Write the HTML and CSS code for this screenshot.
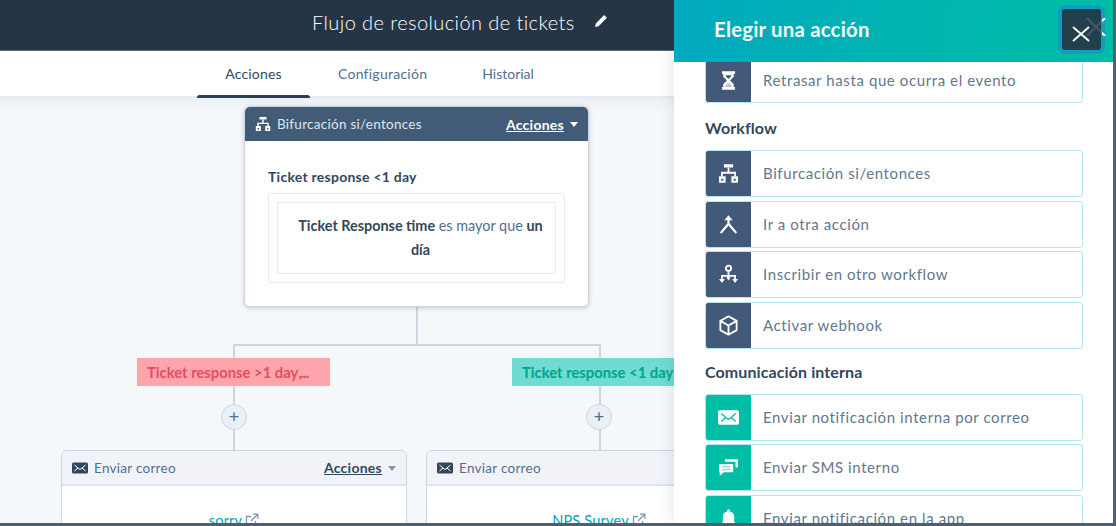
FILE: index.html
```html
<!DOCTYPE html>
<html lang="es">
<head>
<meta charset="utf-8">
<title>Flujo de resolución de tickets</title>
<link rel="stylesheet" href="styles.css">
</head>
<body>
<div class="app">
  <header class="topbar">
    <h1 class="flow-title">Flujo de resolución de tickets</h1>
    <svg class="pencil" viewBox="0 0 14 14"><path d="M1 13l.8-3.600L9.400 1.800a1.200 1.200 0 0 1 1.700 0l1.100 1.100a1.200 1.200 0 0 1 0 1.700L4.600 12.200z" fill="#fff"/></svg>
  </header>
  <nav class="tabs">
    <a class="tab tab-active">Acciones</a>
    <a class="tab tab-config">Configuración</a>
    <a class="tab tab-history">Historial</a>
  </nav>

  <main class="canvas">
    <div class="line line-root"></div>
    <div class="line line-split"></div>
    <div class="line line-left"></div>
    <div class="line line-right"></div>

    <section class="node node-branch">
      <div class="node-head head-dark">
        <svg class="head-icon" viewBox="0 0 16 16"><use href="#i-branch"/></svg>
        <span class="head-label">Bifurcación si/entonces</span>
        <a class="head-action">Acciones</a><i class="caret caret-white"></i>
      </div>
      <div class="branch-body">
        <h3 class="branch-name">Ticket response &lt;1 day</h3>
        <div class="rule-outer">
          <p class="rule-inner"><b>Ticket Response time</b> es mayor que <b>un día</b></p>
        </div>
      </div>
    </section>

    <span class="tag tag-red">Ticket response &gt;1 day<span class="dots">,...</span></span>
    <span class="tag tag-green">Ticket response &lt;1 day</span>
    <span class="add add-left">+</span>
    <span class="add add-right">+</span>

    <section class="node node-mail node-sorry">
      <div class="node-head head-light">
        <svg class="head-icon mail-small" viewBox="0 0 16 12"><use href="#i-mail"/></svg>
        <span class="head-label">Enviar correo</span>
        <a class="head-action">Acciones</a><i class="caret caret-blue"></i>
      </div>
      <div class="mail-body"><a class="mail-link">sorry</a><svg class="ext" viewBox="0 0 14 14"><use href="#i-ext"/></svg></div>
    </section>

    <section class="node node-mail node-nps">
      <div class="node-head head-light">
        <svg class="head-icon mail-small" viewBox="0 0 16 12"><use href="#i-mail"/></svg>
        <span class="head-label">Enviar correo</span>
      </div>
      <div class="mail-body"><a class="mail-link">NPS Survey</a><svg class="ext" viewBox="0 0 14 14"><use href="#i-ext"/></svg></div>
    </section>
  </main>

  <aside class="panel">
    <div class="panel-head">
      <h2 class="panel-title">Elegir una acción</h2>
      <button class="close" aria-label="Cerrar">
        <svg viewBox="0 0 39 41" width="39" height="41">
          <path d="M25 9l18 18M43 9L25 27" stroke="#42596a" stroke-width="2" fill="none"/>
          <path d="M11 18l16 14M27 18L11 32" stroke="#fff" stroke-width="1.800" fill="none"/>
        </svg>
      </button>
      <svg class="under-x" viewBox="0 0 5 18"><path d="M-15 0L3 18M3 0L-15 18" stroke="#fff" stroke-width="2" fill="none"/></svg>
    </div>
    <div class="panel-body">
      <div class="action action-first">
        <span class="action-icon navy"><svg viewBox="0 0 16 16"><path d="M3 1h10v2h-1v2.200L9.200 8 12 10.800V13h1v2H3v-2h1v-2.200L6.800 8 4 5.200V3H3z" fill="#fff"/><path d="M5.800 4h4.400v.6L8 6.800 5.800 4.600z" fill="#42597a"/><path d="M8 9.500 5.800 11.700V13h4.400v-1.300z" fill="#42597a" opacity=".35"/></svg></span>
        <span class="action-label">Retrasar hasta que ocurra el evento</span>
      </div>
      <h4 class="group">Workflow</h4>
      <div class="action">
        <span class="action-icon navy"><svg viewBox="0 0 16 16"><use href="#i-branch"/></svg></span>
        <span class="action-label">Bifurcación si/entonces</span>
      </div>
      <div class="action">
        <span class="action-icon navy"><svg viewBox="0 0 16 16"><path d="M4.800 4.800 8 1l3.200 3.800z" fill="#fff"/><path d="M8 4v3.500L2.500 14M8 7.500 13.500 14" fill="none" stroke="#fff" stroke-width="1.700" stroke-linecap="round"/></svg></span>
        <span class="action-label">Ir a otra acción</span>
      </div>
      <div class="action">
        <span class="action-icon navy"><svg viewBox="0 0 16 16"><circle cx="8" cy="3.200" r="2" fill="none" stroke="#fff" stroke-width="1.400"/><path d="M8 5.500v5M3 12.500V9h10v3.500" fill="none" stroke="#fff" stroke-width="1.400"/><path d="M.8 11.500h4.400L3 14.500zM10.800 11.500h4.400L13 14.500zM6.300 10h3.400L8 12.500z" fill="#fff"/></svg></span>
        <span class="action-label">Inscribir en otro workflow</span>
      </div>
      <div class="action">
        <span class="action-icon navy"><svg viewBox="0 0 16 16"><path d="M8 1 14.200 4.500v7L8 15l-6.200-3.500v-7zM1.800 4.500 8 8l6.200-3.500M8 8v7" fill="none" stroke="#fff" stroke-width="1.400" stroke-linejoin="round"/></svg></span>
        <span class="action-label">Activar webhook</span>
      </div>
      <h4 class="group group-comms">Comunicación interna</h4>
      <div class="action">
        <span class="action-icon teal"><svg viewBox="0 0 16 16"><rect y="2.500" width="16" height="11" rx="1.500" fill="#fff"/><path d="M2.500 5 6 8l-3.500 3M13.500 5 10 8l3.500 3M6 8l2 1.500L10 8" fill="none" stroke="#00bda5" stroke-width="1"/></svg></span>
        <span class="action-label">Enviar notificación interna por correo</span>
      </div>
      <div class="action">
        <span class="action-icon teal"><svg viewBox="0 0 18 16"><path d="M6 1h11v7h-2V3H6z" fill="#fff"/><path d="M1 5h12v7H5l-3.500 3v-3H1z" fill="#fff"/><path d="M3.500 7.500h7M3.500 9.800h7" stroke="#7fdccf" stroke-width="1.200"/></svg></span>
        <span class="action-label">Enviar SMS interno</span>
      </div>
      <div class="action">
        <span class="action-icon teal"><svg viewBox="0 0 16 16"><path d="M8 1a1 1 0 0 1 1 1v.6A4.300 4.300 0 0 1 12.300 7v3.500L14 12.500H2l1.700-2V7A4.300 4.300 0 0 1 7 2.600V2a1 1 0 0 1 1-1zM6.300 13.500h3.400a1.700 1.700 0 0 1-3.400 0z" fill="#fff"/></svg></span>
        <span class="action-label">Enviar notificación en la app</span>
      </div>
    </div>
  </aside>
</div>

<svg class="defs" width="0" height="0">
  <defs>
    <g id="i-branch">
      <path d="M4.500 1h7v2.400h-7z" fill="#fff"/>
      <path d="M8 3.400v4M3 10V7.400h10V10" fill="none" stroke="#fff" stroke-width="1.400"/>
      <path d="M.8 10h5v5h-5zM10.200 10h5v5h-5z" fill="#fff"/>
      <path d="M2.500 12h1.600v1.500H2.500zM11.900 12h1.600v1.500h-1.600z" fill="#42597a"/>
    </g>
    <g id="i-mail">
      <rect y=".5" width="16" height="11" rx="1.500" fill="#33475b"/>
      <path d="M2.500 3 6 6 2.500 9M13.500 3 10 6l3.500 3M6 6l2 1.500L10 6" fill="none" stroke="#fff" stroke-width="1"/>
    </g>
    <g id="i-ext">
      <path d="M10.500 8v4.500h-9v-9H6M8 1.200h4.800V6M12.500 1.500 6 8" fill="none" stroke="#7c98b6" stroke-width="1.300"/>
    </g>
  </defs>
</svg>
</body>
</html>
```
FILE: styles.css
```css
* { box-sizing: border-box; }
html, body { margin: 0; height: 100%; }
body {
  font-family: "Lato", "Open Sans", sans-serif;
  color: #33475b;
  background: #fff;
  overflow: hidden;
}
.defs { position: absolute; }

.app {
  position: relative;
  width: 1116px;
  height: 526px;
  display: flex;
  flex-direction: column;
  overflow: hidden;
  border-bottom: 3px solid #4f5f6d;
  border-right: 3px solid #4f5f6d;
}

/* top bar */
.topbar {
  height: 51px;
  flex: none;
  background: #253545;
  border-bottom: 1px solid #5b6b7a;
  display: flex;
  align-items: center;
  padding-left: 312px;
  padding-bottom: 6px;
}
.flow-title {
  margin: 0;
  font-size: 20px;
  font-weight: 300;
  letter-spacing: .42px;
  color: #fff;
}
.pencil { width: 14px; height: 14px; margin-left: 19px; margin-top: -2px; }

/* tabs */
.tabs {
  height: 47px;
  flex: none;
  background: #fff;
  border-bottom: 2px solid #e4ebf2;
  display: flex;
  padding-left: 197px;
  font-size: 14px;
  color: #516f90;
  position: relative;
}
.tab { line-height: 46px; display: block; text-align: center; letter-spacing: .2px; }
.tab-active {
  width: 113px;
  color: #33475b;
  position: relative;
}
.tab-active::after {
  content: "";
  position: absolute;
  left: 0;
  right: 0;
  bottom: -4px;
  height: 5px;
  border-radius: 3px;
  background: #2d3e50;
}
.tab-config { margin-left: 28px; letter-spacing: .25px; }
.tab-history { margin-left: 55px; letter-spacing: 0; }

/* workflow canvas */
.canvas {
  flex: 1;
  position: relative;
  background: linear-gradient(#ebeff4, #f5f8fa 14px);
}
.line { position: absolute; background: #cbd6e2; }
.line-root { left: 416px; top: 208px; width: 2px; height: 40px; }
.line-split { left: 233px; top: 246px; width: 367px; height: 2px; }
.line-left { left: 233px; top: 246px; width: 2px; height: 106px; }
.line-right { left: 599px; top: 246px; width: 2px; height: 106px; }

.node {
  position: absolute;
  background: #fff;
  border: 1px solid #cbd6e2;
  border-radius: 6px;
  overflow: hidden;
}
.node-head {
  display: flex;
  align-items: center;
  font-size: 13.500px;
}
.head-dark { height: 34px; background: #425b76; color: #dfe6ee; padding: 0 10px 0 10px; }
.head-light {
  height: 35px;
  background: #f1f3f9;
  color: #516f90;
  border-bottom: 2px solid #dbe3eb;
  padding: 0 10px 0 10px;
}
.head-icon { width: 16px; height: 16px; flex: none; margin-right: 6px; }
.mail-small { height: 12px; margin-right: 6px; }
.head-label { flex: 1; letter-spacing: .27px; white-space: nowrap; }
.head-action {
  font-size: 14px;
  font-weight: 700;
  letter-spacing: .25px;
  text-decoration: underline;
  color: inherit;
}
.head-dark .head-action { color: #fff; }
.head-light .head-action { color: #33475b; }
.caret {
  width: 0;
  height: 0;
  margin-left: 6px;
  margin-top: 1px;
  border: 4px solid transparent;
  border-bottom: 0;
  border-top-width: 5px;
}
.caret-white { border-top-color: #fff; }
.caret-blue { border-top-color: #7c98b6; }

.node-branch {
  left: 244px;
  top: 8px;
  width: 345px;
  height: 201px;
  box-shadow: 0 1px 4px rgba(66, 91, 118, .3);
}
.branch-body { padding: 26px 23px 0; }
.branch-name {
  margin: 0 0 6px;
  font-size: 14px;
  font-weight: 700;
  line-height: 20px;
  letter-spacing: .25px;
  color: #33475b;
}
.rule-outer {
  border: 1px solid #e5ebf1;
  border-radius: 2px;
  padding: 8px;
  height: 90px;
}
.rule-inner {
  margin: 0;
  height: 72px;
  border: 1px solid #e5ebf1;
  padding: 11px 6px 0 14px;
  font-size: 14.400px;
  line-height: 24px;
  text-align: center;
  color: #516f90;
}
.rule-inner b { font-weight: 700; color: #33475b; }

.tag {
  position: absolute;
  top: 260px;
  height: 28px;
  line-height: 29px;
  font-size: 14.800px;
  font-weight: 700;
  white-space: nowrap;
  overflow: hidden;
}
.dots { letter-spacing: -1px; }
.tag-red {
  left: 137px;
  width: 193px;
  padding-left: 10px;
  background: #ffa4ab;
  color: #e0505e;
}
.tag-green {
  left: 512px;
  width: 170px;
  padding-left: 10px;
  background: #6edcd0;
  color: #00a38d;
}
.add {
  position: absolute;
  top: 306px;
  width: 26px;
  height: 26px;
  border-radius: 50%;
  background: #eaf0f6;
  border: 1px solid #cbd6e2;
  color: #516f90;
  font-size: 18px;
  line-height: 22px;
  text-align: center;
}
.add-left { left: 221px; }
.add-right { left: 586px; }

.node-mail { top: 352px; width: 346px; height: 100px; }
.node-sorry { left: 61px; }
.node-nps { left: 426px; }
.mail-body {
  text-align: center;
  padding-top: 26px;
  font-size: 14.500px;
}
.mail-link { color: #00a4bd; letter-spacing: .2px; }
.ext { width: 14px; height: 14px; margin-left: 3px; vertical-align: -1px; }

/* right-hand action picker */
.panel {
  position: absolute;
  left: 674px;
  top: 0;
  right: 0;
  bottom: 0;
  background: #fff;
  box-shadow: -6px 0 10px rgba(51, 71, 91, .08);
  overflow: hidden;
}
.panel-head {
  height: 62px;
  position: relative;
  z-index: 1;
  background: linear-gradient(100deg, #00a9be, #00bda5);
  display: flex;
  align-items: center;
  padding: 0 0 4px 40px;
}
.panel-title {
  margin: 0;
  font-size: 20.400px;
  font-weight: 700;
  letter-spacing: .2px;
  color: #f5fbfb;
}
.close {
  position: absolute;
  left: 388px;
  top: 9px;
  width: 39px;
  height: 41px;
  padding: 0;
  border: 0;
  border-radius: 3px;
  background: #223f4e;
  box-shadow: 0 0 0 4px #0d9fbd;
  overflow: hidden;
}
.close svg { display: block; }
.under-x {
  position: absolute;
  left: 428px;
  top: 18px;
  width: 5px;
  height: 18px;
}

.panel-body {
  padding: 0 30px 0 31px;
  margin-top: -5px;
}
.action {
  height: 47px;
  margin-bottom: 3.500px;
  display: flex;
  align-items: center;
  border: 1px solid #b5e6ef;
  border-radius: 3px;
  overflow: hidden;
  font-size: 15px;
  letter-spacing: .6px;
  color: #5f7890;
}
.action-first { height: 46px; margin-bottom: 0; }
.action-icon {
  width: 45px;
  align-self: stretch;
  flex: none;
  display: flex;
  align-items: center;
  justify-content: center;
}
.action-icon svg { width: 21px; height: 21px; }
.navy { background: #42597a; }
.teal { background: #00bda5; }
.action-label { margin-left: 12px; margin-top: -1px; white-space: nowrap; }
.group {
  margin: 0;
  padding: 16px 0 0;
  height: 47px;
  font-size: 16px;
  line-height: 18px;
  font-weight: 700;
  color: #33475b;
  letter-spacing: .1px;
}
.group-comms { padding-top: 14px; height: 45px; margin-top: -3.500px; }
```
